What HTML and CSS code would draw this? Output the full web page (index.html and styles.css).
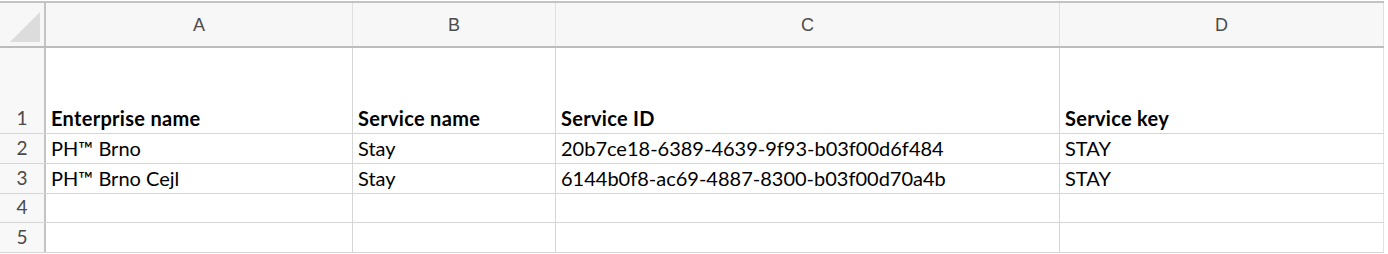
FILE: index.html
```html
<!DOCTYPE html>
<html>
<head>
<meta charset="utf-8">
<link rel="stylesheet" href="styles.css">
</head>
<body>
<div class="sheet">
  <div class="row head">
    <div class="rh corner"><span class="tri"></span></div>
    <div class="c ca">A</div>
    <div class="c cb">B</div>
    <div class="c cc">C</div>
    <div class="c cd">D</div>
  </div>
  <div class="row r1">
    <div class="rh">1</div>
    <div class="c ca b">Enterprise name</div>
    <div class="c cb b">Service name</div>
    <div class="c cc b">Service ID</div>
    <div class="c cd b">Service key</div>
  </div>
  <div class="row r2">
    <div class="rh">2</div>
    <div class="c ca">PH™ Brno</div>
    <div class="c cb">Stay</div>
    <div class="c cc">20b7ce18-6389-4639-9f93-b03f00d6f484</div>
    <div class="c cd">STAY</div>
  </div>
  <div class="row r3">
    <div class="rh">3</div>
    <div class="c ca">PH™ Brno Cejl</div>
    <div class="c cb">Stay</div>
    <div class="c cc">6144b0f8-ac69-4887-8300-b03f00d70a4b</div>
    <div class="c cd">STAY</div>
  </div>
  <div class="row r4">
    <div class="rh">4</div>
    <div class="c ca"></div>
    <div class="c cb"></div>
    <div class="c cc"></div>
    <div class="c cd"></div>
  </div>
  <div class="row r5">
    <div class="rh">5</div>
    <div class="c ca"></div>
    <div class="c cb"></div>
    <div class="c cc"></div>
    <div class="c cd"></div>
  </div>
</div>
</body>
</html>
```
FILE: styles.css
```css
html, body {
  margin: 0;
  padding: 0;
  background: #ffffff;
}
.sheet {
  padding-top: 1px;
  width: 1384px;
  font-family: Lato, "Liberation Sans", sans-serif;
  font-size: 20px;
  color: #000;
}
.row {
  display: flex;
  box-sizing: border-box;
  border-bottom: 1px solid #d6d6d6;
}
.row.head {
  height: 47px;
  border-top: 2px solid #c3c3c3;
  border-bottom: 2px solid #bcbcbc;
  background: #f7f7f7;
}
.r1 { height: 86px; }
.r2, .r3, .r5 { height: 30px; }
.r4 { height: 29px; }
.rh {
  box-sizing: border-box;
  width: 46px;
  flex: none;
  border-right: 2px solid #c4c4c4;
  background: #f8f8f8;
  color: #4a4a4a;
  font-size: 19px;
  display: flex;
  align-items: flex-end;
  justify-content: center;
  padding-bottom: 5px;
  line-height: 20px;
}
.c {
  box-sizing: border-box;
  flex: none;
  border-right: 1px solid #d6d6d6;
  padding: 0 0 5px 5px;
  display: flex;
  align-items: flex-end;
  line-height: 20px;
  white-space: nowrap;
}
.ca { width: 307px; }
.cb { width: 203px; }
.cc { width: 504px; }
.cd { width: 324px; border-right-color: #e2e2e2; }
.b { font-weight: 700; letter-spacing: 0.3px; }
.head .c {
  font-family: "Liberation Sans", Arial, sans-serif;
  font-size: 18px;
  color: #4c4c4c;
  justify-content: center;
  align-items: center;
  padding: 0;
  border-right-color: #e0e0e0;
}
.head .rh {
  padding: 0;
  position: relative;
  background: #f7f7f7;
}
.tri {
  position: absolute;
  left: 10px;
  top: 9px;
  width: 30px;
  height: 30px;
  background: #dcdcdc;
  clip-path: polygon(100% 0, 100% 100%, 0 100%);
}
```
